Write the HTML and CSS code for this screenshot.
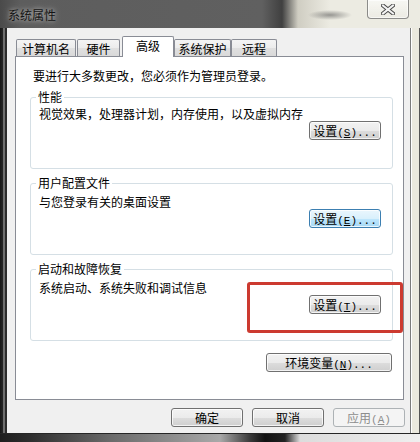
FILE: index.html
```html
<!DOCTYPE html>
<html lang="zh-CN">
<head>
<meta charset="utf-8">
<title>系统属性</title>
<link rel="stylesheet" href="styles.css">
</head>
<body>
<div class="window">
  <div class="titlebar">
    <span class="title">系统属性</span>
    <div class="close">
      <svg width="14" height="11" viewBox="0 0 14 11">
        <path d="M2 1.5 L12 9.5 M12 1.5 L2 9.5" stroke="#4a4a4a" stroke-width="4" stroke-linecap="square" fill="none"/>
        <path d="M2 1.5 L12 9.5 M12 1.5 L2 9.5" stroke="#f4f4f4" stroke-width="2" stroke-linecap="square" fill="none"/>
      </svg>
    </div>
  </div>
  <div class="middle">
    <div class="frame-left"></div>
    <div class="client">
      <div class="tabs">
        <div class="tab t1">计算机名</div>
        <div class="tab t2">硬件</div>
        <div class="tab sel">高级</div>
        <div class="tab t4">系统保护</div>
        <div class="tab t5">远程</div>
      </div>
      <div class="panel">
        <p class="note">要进行大多数更改，您必须作为管理员登录。</p>
        <fieldset class="group g1">
          <legend>性能</legend>
          <p>视觉效果，处理器计划，内存使用，以及虚拟内存</p>
          <button class="btn">设置<span class="k">(<u>S</u>)...</span></button>
        </fieldset>
        <fieldset class="group g2">
          <legend>用户配置文件</legend>
          <p>与您登录有关的桌面设置</p>
          <button class="btn focus">设置<span class="k">(<u>E</u>)...</span></button>
        </fieldset>
        <fieldset class="group g3">
          <legend>启动和故障恢复</legend>
          <p>系统启动、系统失败和调试信息</p>
          <button class="btn">设置<span class="k">(<u>T</u>)...</span></button>
        </fieldset>
        <button class="btn env">环境变量<span class="k">(<u>N</u>)...</span></button>
        <div class="mark"></div>
      </div>
      <div class="actions">
        <button class="btn">确定</button>
        <button class="btn">取消</button>
        <button class="btn disabled">应用<span class="k">(<u>A</u>)</span></button>
      </div>
    </div>
    <div class="frame-right"></div>
  </div>
  <div class="frame-bottom"></div>
</div>
</body>
</html>
```

FILE: styles.css
```css
* { box-sizing: border-box; }
html, body { margin: 0; padding: 0; }
body {
  width: 420px;
  height: 442px;
  overflow: hidden;
  background: #ece9dd;
  font: 12px/14px "Noto Sans CJK SC", "Liberation Sans", sans-serif;
  color: #000;
}
.window {
  width: 420px;
  height: 442px;
  display: flex;
  flex-direction: column;
}
.titlebar {
  height: 28px;
  display: flex;
  justify-content: space-between;
  align-items: flex-start;
  background:
    radial-gradient(ellipse 22px 5px at 330px 15px, rgba(80,80,80,.55), rgba(80,80,80,0)),
    linear-gradient(90deg, #4a4a4a 0, #5d5d5d 20px, #606060 262px, #404040 282px, #cfcdc2 298px, #ecebe2 330px, #ecebe2 420px);
}
.title {
  margin: 8px 0 0 8px;
  line-height: 14px;
  color: #141414;
  text-shadow: 0 0 4px rgba(255,255,255,.55), 0 0 8px rgba(255,255,255,.35);
}
.close {
  width: 42px;
  height: 19px;
  margin-right: 11px;
  border: 1px solid rgba(70,70,70,.6);
  border-top: none;
  border-radius: 0 0 4px 4px;
  background: linear-gradient(rgba(255,255,255,.6), rgba(235,235,228,.5));
  box-shadow: inset 0 0 0 1px rgba(255,255,255,.6);
  display: flex;
  align-items: center;
  justify-content: center;
}
.middle {
  display: flex;
  height: 405px;
}
.frame-left {
  width: 7px;
  background: linear-gradient(90deg, #161616 0, #262626 3px, #6e6e6e 3px, #6e6e6e 5px, #2b2b2b 5px, #2b2b2b 7px);
}
.client {
  width: 404px;
  background: #f0f0f0;
  border-right: 1px solid #7c7c7c;
  padding-top: 8px;
  display: flex;
  flex-direction: column;
}
.frame-right {
  flex: 1;
  background: #ebe9de;
  border-left: 1px solid #fff;
  border-right: 1px solid #555;
}
.frame-bottom {
  height: 9px;
  border-top: 1px solid #262626;
  background: linear-gradient(90deg, #1e1e1e 0, #2e2e2e 30px, #6a6a6a 110px, #a9a9a9 220px, #3a3a3a 250px, #111 265px, #222 285px, #dcdcdc 300px, #efefef 420px);
}

/* tabs */
.tabs {
  display: flex;
  align-items: flex-end;
  height: 21px;
  margin-bottom: -1px;
  padding-left: 9px;
  position: relative;
  z-index: 1;
}
.tab {
  height: 17px;
  margin-bottom: 1px;
  border: 1px solid #898c95;
  border-bottom: none;
  border-radius: 2px 2px 0 0;
  background: linear-gradient(#f4f4f4, #ececec 50%, #e0e0e0 51%, #d9d9d9);
  padding-top: 2px;
  text-align: center;
  line-height: 14px;
  white-space: nowrap;
}
.t1 { width: 60px; }
.t2 { width: 43px; margin-left: 1px; }
.tab.sel {
  width: 52px;
  margin-left: 2px;
  height: 21px;
  margin-bottom: 0;
  background: #fff;
  padding-top: 2px;
}
.t4 { width: 57px; }
.t5 { width: 46px; }

/* panel */
.panel {
  flex: 1;
  margin: 0 6px 0 8px;
  background: #fff;
  border: 1px solid #898c95;
  padding: 12px 10px 0 14px;
  position: relative;
  display: flex;
  flex-direction: column;
}
.note {
  margin: 0 0 8px 3px;
  line-height: 14px;
}
.group {
  margin: 0 0 8px;
  min-width: 0;
  height: 78px;
  padding: 4px 11px 9px 8px;
  border: 1px solid #d5dfe5;
  border-radius: 3px;
  display: flex;
  flex-direction: column;
}
.g2, .g3 { padding-top: 6px; }
.group legend {
  padding: 0 2px;
  margin-left: -3px;
  line-height: 12px;
}
.group p {
  margin: 0;
  line-height: 14px;
}
.group .btn {
  margin-top: auto;
  align-self: flex-end;
}

/* buttons */
.btn {
  width: 72px;
  height: 19px;
  padding: 0;
  border: 1px solid #707070;
  border-radius: 3px;
  background: linear-gradient(#f2f2f2 0, #ebebeb 50%, #dddddd 51%, #cfcfcf 100%);
  box-shadow: inset 0 0 0 1px rgba(255,255,255,.75);
  font: 12px/17px "Noto Sans CJK SC", "Liberation Sans", sans-serif;
  color: #000;
  text-align: center;
  white-space: nowrap;
}
.btn .k {
  font-family: "Liberation Mono", monospace;
  font-size: 11px;
  letter-spacing: 0;
}
.btn u { text-decoration-thickness: 1px; text-underline-offset: 1px; }
.btn.focus {
  border-color: #3c7fb1;
  background: linear-gradient(#eaf6fd 0, #d9f0fc 50%, #bee6fd 51%, #a7d9f5 100%);
}
.btn.env {
  width: 126px;
  align-self: flex-end;
  margin: 4px 1px 0 0;
}
.btn.disabled {
  color: #8d8d8d;
  border-color: #adb2b5;
  background: #f4f4f4;
  box-shadow: none;
}
.mark {
  position: absolute;
  left: 231px;
  top: 225px;
  width: 156px;
  height: 51px;
  border: 3px solid #cc3a30;
  border-radius: 3px;
}

/* bottom buttons */
.actions {
  display: flex;
  justify-content: flex-end;
  gap: 9px;
  padding: 8px 5px 6px 0;
}
```
